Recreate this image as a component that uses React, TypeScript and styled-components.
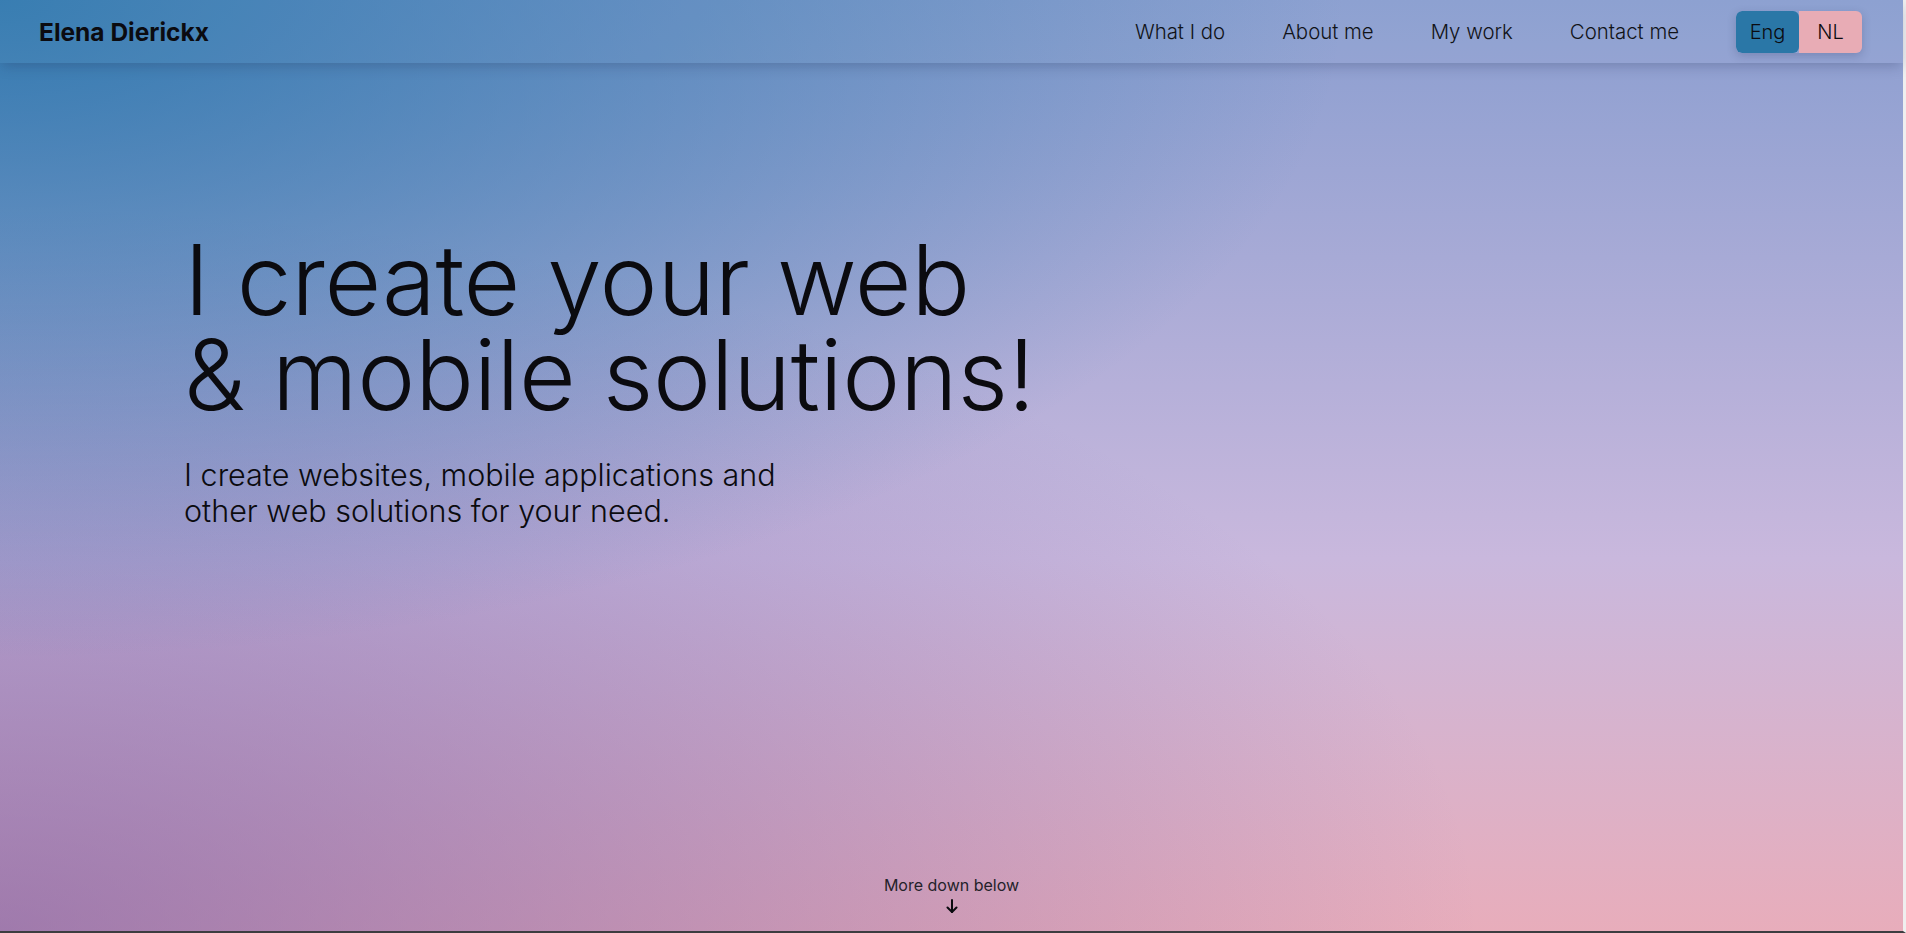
import React from 'react'
import styled, { createGlobalStyle } from 'styled-components'

const GlobalStyle = createGlobalStyle`
  html, body {
    margin: 0;
    padding: 0;
    overflow: hidden;
  }
  body {
    font-family: Inter, "Noto Sans", "Liberation Sans", sans-serif;
    color: #0b0b0f;
  }
`

const Page = styled.div`
  box-sizing: border-box;
  height: 100vh;
  display: flex;
  flex-direction: column;
  border-bottom: 2px solid #3d3d40;
  border-right: 3px solid #efefef;
  background:
    radial-gradient(ellipse farthest-corner at 0% 0%, rgba(35, 115, 170, 0.85) 0%, rgba(35, 115, 170, 0) 50%),
    radial-gradient(ellipse farthest-corner at 0% 100%, rgba(100, 80, 160, 0.55) 0%, rgba(100, 80, 160, 0) 55%),
    linear-gradient(to bottom, #8a9ed0 0%, #c9b8dd 60%, #e8adbb 100%);
`

const Header = styled.header`
  height: 63px;
  flex-shrink: 0;
  display: flex;
  align-items: center;
  justify-content: space-between;
  padding: 0 41px 0 39px;
  background: rgba(255, 255, 255, 0.03);
  box-shadow: 0 5px 12px -2px rgba(40, 50, 90, 0.28);
  position: relative;
  z-index: 1;
`

const Logo = styled.a`
  font-size: 24.5px;
  font-weight: 700;
  color: #0b0b10;
  text-decoration: none;
`

const Nav = styled.nav`
  display: flex;
  align-items: center;
  gap: 57px;
`

const NavLink = styled.a`
  font-size: 20.4px;
  font-weight: 300;
  color: #111318;
  text-decoration: none;
`

const LangSwitch = styled.div`
  display: flex;
  border-radius: 6px;
  overflow: hidden;
  box-shadow: 0 3px 10px rgba(30, 40, 80, 0.22);
`

const LangButton = styled.button<{ $active?: boolean }>`
  width: 63px;
  height: 42px;
  border: none;
  padding: 0;
  font-family: inherit;
  font-size: 20px;
  font-weight: 300;
  color: #0b0b10;
  background: ${p => (p.$active ? '#2a77a7' : '#e8acb5')};
  border-radius: ${p => (p.$active ? '6px' : '0')};
  cursor: pointer;
`

const Hero = styled.main`
  flex: 1;
  display: flex;
  flex-direction: column;
  padding: 169px 0 18px 184px;
`

const Title = styled.h1`
  margin: 0;
  font-size: 98px;
  font-weight: 300;
  line-height: 95px;
  letter-spacing: -0.3px;
`

const Lead = styled.p`
  margin: 35px 0 0;
  font-size: 30.5px;
  font-weight: 300;
  line-height: 36px;
`

const ScrollHint = styled.div`
  margin-top: auto;
  align-self: center;
  margin-left: -184px;
  display: flex;
  flex-direction: column;
  align-items: center;
  gap: 4px;
  font-size: 16px;
  line-height: 20px;
  color: #24222a;
`

export default function App() {
  return (
    <>
      <GlobalStyle />
      <Page>
        <Header>
          <Logo href="#">Elena Dierickx</Logo>
          <Nav>
            <NavLink href="#">What I do</NavLink>
            <NavLink href="#">About me</NavLink>
            <NavLink href="#">My work</NavLink>
            <NavLink href="#">Contact me</NavLink>
            <LangSwitch>
              <LangButton $active>Eng</LangButton>
              <LangButton>NL</LangButton>
            </LangSwitch>
          </Nav>
        </Header>
        <Hero>
          <Title>
            I create your web
            <br />
            &amp; mobile solutions!
          </Title>
          <Lead>
            I create websites, mobile applications and
            <br />
            other web solutions for your need.
          </Lead>
          <ScrollHint>
            <span>More down below</span>
            <svg width="12" height="14" viewBox="0 0 12 14" fill="none" stroke="#0b0b10" strokeWidth="2" strokeLinecap="round" strokeLinejoin="round">
              <path d="M6 1v12" />
              <path d="M1.5 8.5L6 13l4.5-4.5" />
            </svg>
          </ScrollHint>
        </Hero>
      </Page>
    </>
  )
}
